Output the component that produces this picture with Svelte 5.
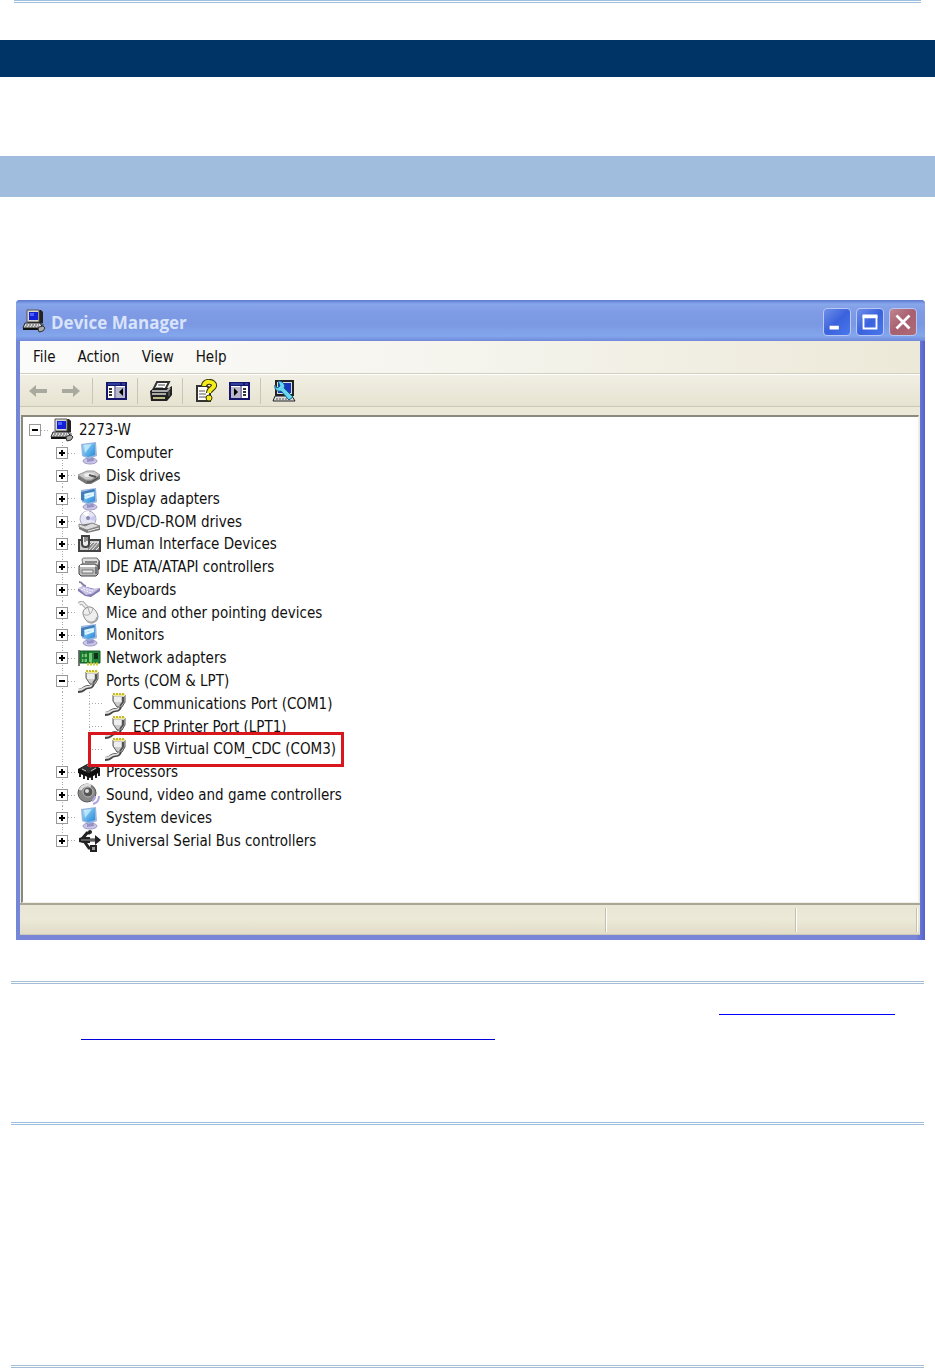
<script lang="ts">
  const menus = ['File', 'Action', 'View', 'Help'];

  const devices = [
    { label: '2273-W', icon: 'pc', depth: 0, open: true },
    { label: 'Computer', icon: 'monitor', depth: 1 },
    { label: 'Disk drives', icon: 'disk', depth: 1 },
    { label: 'Display adapters', icon: 'display', depth: 1 },
    { label: 'DVD/CD-ROM drives', icon: 'dvd', depth: 1 },
    { label: 'Human Interface Devices', icon: 'hid', depth: 1 },
    { label: 'IDE ATA/ATAPI controllers', icon: 'ide', depth: 1 },
    { label: 'Keyboards', icon: 'keyboard', depth: 1 },
    { label: 'Mice and other pointing devices', icon: 'mouse', depth: 1 },
    { label: 'Monitors', icon: 'display', depth: 1 },
    { label: 'Network adapters', icon: 'network', depth: 1 },
    { label: 'Ports (COM & LPT)', icon: 'port', depth: 1, open: true },
    { label: 'Communications Port (COM1)', icon: 'port', depth: 2 },
    { label: 'ECP Printer Port (LPT1)', icon: 'port', depth: 2 },
    { label: 'USB Virtual COM_CDC (COM3)', icon: 'port', depth: 2, marked: true, last: true },
    { label: 'Processors', icon: 'cpu', depth: 1 },
    { label: 'Sound, video and game controllers', icon: 'sound', depth: 1 },
    { label: 'System devices', icon: 'monitor', depth: 1 },
    { label: 'Universal Serial Bus controllers', icon: 'usb', depth: 1, last: true },
  ];
</script>

{#snippet icon(name: string)}
  <svg class="icon" viewBox="0 0 24 24" width="24" height="24" aria-hidden="true">
    {#if name === 'pc'}
      <path d="M6 1h13l2 2v11H6z" fill="#222" />
      <path d="M5 1h12v12H5z" fill="#d8d8d0" stroke="#555" />
      <path d="M7 3h9v8H7z" fill="#1420d8" />
      <path d="M8 4h4v3H8z" fill="#4c60ff" />
      <path d="M3 14h15l3 5H1z" fill="#ddd" stroke="#222" />
      <path d="M4 16h13M3 18h15" stroke="#555" stroke-dasharray="2 1" />
      <path d="M1 20h17" stroke="#111" stroke-width="2" />
      <path d="M19 14c3 1 2 3 1 4" stroke="#333" fill="none" />
      <path d="M17 18l4-1 2 2-2 3-4 1-1-3z" fill="#aaa" stroke="#333" />
    {:else if name === 'monitor' || name === 'display'}
      <ellipse cx="13" cy="20" rx="7" ry="3" fill="#cbc6e6" stroke="#9d98c8" />
      <path d="M10 16l6-1 1 5-7 1z" fill="#9792c4" />
      <path d="M4 3l15-2 1 14-8 3-7-3z" fill="#9cb4dc" />
      <path d="M6 4l12-2v12l-7 2-5-2z" fill="url(#screen)" />
      <path d="M7 4l8-1-7 9z" fill="#d4f4ff" opacity=".7" />
      {#if name === 'display'}
        <path d="M4 5l13-3 1 2-11 3v7l-3-1z" fill="#457db9" />
        <path d="M8 8l9-2M8 11l9-3" stroke="#e2f8ff" stroke-width="2" />
      {/if}
    {:else if name === 'disk'}
      <path d="M1 12l9-4h7l6 4v3l-9 5H9l-8-5z" fill="#777" />
      <path d="M1 11l9-4h7l6 4-9 5H9z" fill="#c9c9c9" stroke="#999" />
      <ellipse cx="12" cy="11" rx="5" ry="2" fill="#eee" />
      <path d="M12 11l7 2" stroke="#555" stroke-width="2" />
      <path d="M10 18h4l7-4" stroke="#444" fill="none" />
    {:else if name === 'dvd'}
      <circle cx="11" cy="9" r="8" fill="#e6e5f4" stroke="#aaa9c5" />
      <path d="M11 9l-5-6a8 8 0 0 1 6-2z" fill="#fff" />
      <path d="M11 9l7-4a8 8 0 0 1 0 6z" fill="#c9caea" />
      <circle cx="11" cy="8" r="2" fill="#8784b4" />
      <path d="M2 15l13-2 8 3v4l-13 3-8-4z" fill="#777" />
      <path d="M2 14l6 2 7-3 8 3-13 4-8-3z" fill="#ddd" stroke="#888" />
      <path d="M11 21l11-3" stroke="#eee" />
    {:else if name === 'hid'}
      <path d="M2 8h21v11H2z" fill="#ccc" stroke="#444" stroke-width="2" />
      <path d="M11 11h11v7H11z" fill="#888" />
      <path d="M12 18l7-8M15 18l7-8M12 14l4-4M19 18l3-3" stroke="#eee" />
      <path d="M5 4h7v8c0 4-7 4-7 0z" fill="#eee" stroke="#444" stroke-width="2" />
      <path d="M8 4v6M10 4v5" stroke="#333" />
    {:else if name === 'ide'}
      <path d="M6 3h14l3 3v8l-3 2H8z" fill="#555" />
      <path d="M5 5c0-2 2-2 3-2h12l2 3-2 7H7z" fill="#ddd" stroke="#777" />
      <path d="M8 7h12" stroke="#888" stroke-width="2" />
      <path d="M2 11l3-2h13l3 2v8l-2 2H4l-2-2z" fill="#bbb" stroke="#444" />
      <path d="M3 11h15" stroke="#fff" stroke-width="2" />
      <path d="M5 15h11v3H5z" fill="#eee" stroke="#777" />
      <path d="M19 12v7" stroke="#777" stroke-width="2" />
    {:else if name === 'keyboard'}
      <path d="M2 4c5 0 2 4 7 4" stroke="#8883a4" stroke-width="2" fill="none" />
      <path d="M1 11l5-3 12 3 5-1v3l-9 6-6-1-7-5z" fill="#837aae" />
      <path d="M1 10l5-2 9 3 8-1-8 6-6 1z" fill="#c8c2e7" />
      <path d="M4 11l10 4M6 10l10 3" stroke="#fff" stroke-dasharray="2 1" />
    {:else if name === 'mouse'}
      <path d="M2 3c5-4 4 2 9 4" stroke="#aaa" stroke-width="4" fill="none" />
      <path d="M2 3c5-4 4 2 9 4" stroke="#eee" stroke-width="2" fill="none" />
      <path d="M9 7c6-4 12 4 12 9 0 6-9 8-12 3-3-4-5-9 0-12z" fill="#eee" stroke="#888" />
      <path d="M6 13c5 3 9 0 10-6M11 7l2 6" stroke="#aaa" fill="none" />
      <path d="M10 20c4 3 10 1 10-4" stroke="#aaa" stroke-width="2" fill="none" />
    {:else if name === 'network'}
      <path d="M2 4v16" stroke="#777" stroke-width="2" />
      <path d="M3 5h20v12H3z" fill="#21863b" stroke="#195827" />
      <path d="M5 8h5v3H5zM5 13h5v3H5zM12 7h3v9h-3z" fill="#75c974" />
      <path d="M17 7h4v6h-4z" fill="#162d19" />
      <path d="M10 18h12" stroke="#ccd33a" stroke-width="3" stroke-dasharray="2 1" />
      <path d="M7 5v12M11 5v12" stroke="#155c27" />
    {:else if name === 'port'}
      <path d="M16 13c0 7-5 4-8 6-2 2-4 3-7 3" stroke="#444" stroke-width="4" fill="none" />
      <path d="M15 13c0 7-4 3-8 6-2 2-4 2-6 2" stroke="#ddd" stroke-width="2" fill="none" />
      <path d="M9 3h12v7l-3 5h-5l-4-6z" fill="#ccc" stroke="#555" />
      <path d="M19 5v5l-3 4" stroke="#555" stroke-width="2" fill="none" />
      <path d="M10 5h7v5h-7z" fill="#eee" />
      <path d="M9 2h12v2H9z" fill="#eeea94" />
      <path d="M9 2h12" stroke="#c8b92b" stroke-width="2" stroke-dasharray="2 1" />
    {:else if name === 'cpu'}
      <path d="M3 12v5M7 14v5M11 15v5M15 15v5M19 13v5M22 11v5" stroke="#222" stroke-width="2" />
      <path d="M1 9l11-6 11 5v4l-10 6-12-5z" fill="#111" />
      <path d="M2 9l10-5 9 4-9 5z" fill="#333" />
      <path d="M5 9l4 2M10 5l4 2M14 11l5-3" stroke="#bbb" />
    {:else if name === 'sound'}
      <circle cx="10" cy="10" r="9" fill="#888" stroke="#555" />
      <path d="M3 7a8 8 0 0 1 11-4" stroke="#ddd" stroke-width="3" fill="none" />
      <circle cx="11" cy="9" r="5" fill="#555" stroke="#bbb" />
      <circle cx="10" cy="8" r="2" fill="#ddd" />
      <path d="M15 18c2-1 3-3 3-5M16 21c4-1 6-4 6-8" stroke="#aaa7df" stroke-width="2" fill="none" />
    {:else if name === 'usb'}
      <path d="M2 11h18M5 10l5-6h3M7 12l5 7h3" stroke="#222" stroke-width="3" fill="none" />
      <path d="M6 8h7v6H6l-4-1V9z" fill="#222" />
      <path d="M4 11h15" stroke="#999" />
      <circle cx="13" cy="3" r="2" fill="#222" />
      <path d="M14 17h5v5h-5z" fill="#999" stroke="#222" stroke-width="2" />
      <path d="M18 6l6 5-6 5z" fill="#222" />
    {:else if name === 'back' || name === 'forward'}
      <path
        d={name === 'back' ? 'M3 12l7-6v4h11v4H10v4z' : 'M21 12l-7-6v4H3v4h11v4z'}
        fill="#aaa99f"
      />
    {:else if name === 'tree' || name === 'pane'}
      <path d="M3 4h19v16H3z" fill="#fff" stroke="#16166d" stroke-width="2" />
      <path d="M3 3h19v4H3z" fill="#16166d" />
      <path d="M4 5h12M18 5h3" stroke="#4969cf" />
      {#if name === 'tree'}
        <path d="M12 8h9v11h-9z" fill="#b9b8ca" />
        <path d="M11 7v12" stroke="#16166d" />
        <path d="M5 10h4M5 13h4M5 16h4" stroke="#333" stroke-width="2" stroke-dasharray="3 1" />
        <path d="M19 9v8l-4-4z" fill="#000" />
      {:else}
        <path d="M4 8h9v11H4z" fill="#b9b8ca" />
        <path d="M14 7v12" stroke="#16166d" />
        <path d="M16 10h4M16 13h4M16 16h4" stroke="#333" stroke-width="2" stroke-dasharray="3 1" />
        <path d="M7 9v8l4-4z" fill="#000" />
      {/if}
    {:else if name === 'printer'}
      <path d="M8 3h12l-4 8H4z" fill="#fff" stroke="#333" stroke-width="2" />
      <path d="M9 6h7M7 9h7" stroke="#444" />
      <path d="M1 12l4-3h15l3-2v9l-5 6H2z" fill="#222" />
      <path d="M3 12h15l3-3M3 15h14" stroke="#aaa" stroke-width="2" fill="none" />
      <path d="M4 19h12" stroke="#bcbc84" stroke-width="2" />
      <path d="M20 12v5" stroke="#777" />
    {:else if name === 'help'}
      <path d="M3 7h10l3 3v12H3z" fill="#fff" stroke="#333" stroke-width="2" />
      <path d="M5 12h6M5 15h7M5 18h7" stroke="#555" />
      <path d="M10 7c0-6 11-5 10 0-1 3-5 3-5 7" stroke="#383800" stroke-width="6" fill="none" />
      <path d="M10 7c0-6 11-5 10 0-1 3-5 3-5 7" stroke="#f5ec1b" stroke-width="4" fill="none" />
      <circle cx="15" cy="19" r="3" fill="#f5ec1b" stroke="#383800" />
    {:else if name === 'scan'}
      <path d="M4 2h17v14H4z" fill="#ddd" stroke="#222" stroke-width="2" />
      <path d="M6 4h13v10H6z" fill="#1838c2" />
      <path d="M3 17h17l3 5H1z" fill="#ddd" stroke="#222" />
      <path d="M4 20h14" stroke="#555" stroke-dasharray="2 1" />
      <path d="M6 2l2 5-3 2-2-3c-1 5 3 7 6 6l8 9 4-3-9-9c2-4-2-7-6-7z" fill="#68d7f1" stroke="#135a80" />
    {/if}
  </svg>
{/snippet}

<svg class="defs" width="0" height="0" aria-hidden="true">
  <linearGradient id="screen" x1="0" x2="1" y1="0" y2="1">
    <stop offset="0" stop-color="#9ee0fc" />
    <stop offset="1" stop-color="#2687d9" />
  </linearGradient>
</svg>

<div class="page">
  <div class="rule top"></div>
  <div class="band dark"></div>
  <div class="band light"></div>

  <main class="window">
    <header class="titlebar">
      {@render icon('pc')}
      <h1>Device Manager</h1>
      <button class="caption" aria-label="Minimize">
        <svg viewBox="0 0 28 28" width="26" height="26"><path d="M6 20h10" stroke="#fff" stroke-width="4" /></svg>
      </button>
      <button class="caption" aria-label="Maximize">
        <svg viewBox="0 0 28 28" width="26" height="26">
          <path d="M7 8h14v13H7z" fill="none" stroke="#fff" stroke-width="2" />
          <path d="M6 8h16" stroke="#fff" stroke-width="4" />
        </svg>
      </button>
      <button class="caption close" aria-label="Close">
        <svg viewBox="0 0 28 28" width="26" height="26"><path d="M7 7l14 14M21 7L7 21" stroke="#fff" stroke-width="3" /></svg>
      </button>
    </header>

    <div class="client">
      <nav class="menubar">
        {#each menus as menu}
          <button>{menu}</button>
        {/each}
      </nav>
      <div class="toolbar">
        <button aria-label="Back">{@render icon('back')}</button>
        <button aria-label="Forward">{@render icon('forward')}</button>
        <i></i>
        <button aria-label="Show console tree">{@render icon('tree')}</button>
        <i></i>
        <button aria-label="Print">{@render icon('printer')}</button>
        <i></i>
        <button aria-label="Help">{@render icon('help')}</button>
        <button aria-label="Show action pane">{@render icon('pane')}</button>
        <i></i>
        <button aria-label="Scan for hardware changes">{@render icon('scan')}</button>
      </div>

      <div class="pane">
        <ul>
          {#each devices as device}
            <li class:marked={device.marked}>
              {#if device.depth > 0}
                <span class="indent"></span>
              {/if}
              {#if device.depth > 1}
                <span class="indent guide"></span>
              {/if}
              <span class="node" class:guide={device.depth > 0} class:last={device.last}>
                {#if device.depth < 2}
                  <button class="expander" class:open={device.open} aria-label="Toggle {device.label}"></button>
                {/if}
              </span>
              <span class="branch" class:long={device.depth > 1}></span>
              {@render icon(device.icon)}
              <span class="label">{device.label}</span>
            </li>
          {/each}
        </ul>
      </div>

      <footer class="status">
        <span></span>
        <span></span>
        <span></span>
      </footer>
    </div>
  </main>

  <section class="note">
    <a class="first" href="#driver" aria-label="Driver"></a>
    <a class="second" href="#driver" aria-label="Driver installation"></a>
  </section>
  <div class="rule bottom"></div>
</div>

<style>
  :global(body) {
    margin: 0;
    background: #fff;
  }
  .page {
    font-family: "DejaVu Sans Condensed", "DejaVu Sans", sans-serif;
    font-size: 15px;
    color: #111;
  }
  .defs {
    position: absolute;
  }
  .icon {
    display: block;
    flex: none;
  }
  button {
    font: inherit;
    color: inherit;
    padding: 0;
    border: 0;
    background: none;
  }

  .rule {
    height: 1px;
    border-top: 1px solid #9fbfdf;
    border-bottom: 1px solid #9fbfdf;
    margin: 0 11px;
  }
  .rule.top {
    margin: 0 14px 37px;
  }
  .band {
    height: 37px;
    background: #003366;
  }
  .band.light {
    height: 41px;
    margin: 79px 0 103px;
    background: #a0bddd;
  }

  .window {
    box-sizing: border-box;
    margin: 0 10px 41px 16px;
    padding: 0 5px 5px 4px;
    background: linear-gradient(90deg, #6f88d8, #7986d8 4px, #7986d8 99%, #5262cf);
    border-radius: 4px 4px 0 0;
    overflow: hidden;
  }
  .titlebar {
    display: flex;
    align-items: center;
    gap: 5px;
    height: 41px;
    margin: 0 -5px 0 -4px;
    padding: 0 8px 0 6px;
    box-sizing: border-box;
    background: linear-gradient(#5c79d0, #88a6ea 4px, #7f9be5 12px, #7b98e3 24px, #83a6ec 36px, #7088d9);
  }
  h1 {
    flex: 1;
    margin: 4px 0 0;
    font: bold 17px "Open Sans", "Noto Sans", sans-serif;
    color: #d9e3fa;
  }
  .caption {
    display: flex;
    margin-top: 3px;
    border: 1px solid #b8c8f5;
    border-radius: 4px;
    background: linear-gradient(135deg, #6f8fea, #3a62dc 50%, #4a78ee);
  }
  .caption.close {
    background: linear-gradient(135deg, #c08590, #a85f70 50%, #b06b75);
  }

  .client {
    background: #ece9d8;
  }
  .menubar {
    display: flex;
    align-items: center;
    gap: 22px;
    height: 32px;
    padding-left: 13px;
    background: linear-gradient(90deg, #fbfbfa, #f5f4ed 50%, #ece9d8);
    border-bottom: 1px solid #d2cfbf;
  }
  .toolbar {
    display: flex;
    align-items: center;
    gap: 9px;
    height: 31px;
    padding-left: 6px;
    border-top: 1px solid #fff;
    border-bottom: 1px solid #cbc8b8;
    background: linear-gradient(#f1efe4, #e7e3d1);
  }
  .toolbar i {
    width: 1px;
    height: 26px;
    margin-right: 2px;
    background: #c9c6b6;
  }

  .pane {
    margin: 8px 1px 0 1px;
    min-height: 488px;
    border: 2px solid #8b897d;
    border-right: 1px solid #f1efe2;
    border-bottom: 1px solid #f1efe2;
    background: #fff;
    box-sizing: border-box;
  }
  ul {
    display: grid;
    grid-auto-rows: 1fr;
    min-height: 433px;
    margin: 0;
    padding: 2px 0 0 6px;
    list-style: none;
  }
  li {
    display: flex;
    align-items: center;
    justify-self: start;
    min-height: 0;
    height: 100%;
    position: relative;
    white-space: nowrap;
  }
  li .icon {
    margin: -1px 5px -1px 1px;
  }
  .indent {
    width: 27px;
    align-self: stretch;
  }
  .node {
    display: flex;
    align-items: center;
    width: 12px;
    align-self: stretch;
  }
  .guide {
    background: repeating-linear-gradient(#aaa 0 1px, transparent 1px 3px) 6px 0 / 1px 100% no-repeat;
  }
  .guide.last {
    background-size: 1px 50%;
  }
  .expander {
    width: 12px;
    height: 12px;
    border: 1px solid #999;
    background:
      linear-gradient(#000, #000) center / 6px 2px no-repeat,
      linear-gradient(#000, #000) center / 2px 6px no-repeat,
      #fff;
  }
  .expander.open {
    background: linear-gradient(#000, #000) center / 6px 2px no-repeat, #fff;
  }
  .branch {
    width: 8px;
    height: 1px;
    background: repeating-linear-gradient(90deg, #aaa 0 1px, transparent 1px 3px);
  }
  .branch.long {
    width: 14px;
    margin-left: -6px;
  }
  .marked::after {
    content: "";
    position: absolute;
    inset: -6px -8px -6px 59px;
    border: 3px solid #d9161c;
    z-index: 1;
  }

  .status {
    display: grid;
    grid-template-columns: 1fr 190px 121px;
    height: 32px;
    padding: 3px 3px 2px 0;
    box-sizing: border-box;
    border-top: 2px solid #aaa798;
    border-bottom: 1px solid #d0c9b8;
    background: linear-gradient(#e9e6d6, #ece9d8 50%, #e2dcc8);
  }
  .status span {
    border-right: 1px solid #c2bfad;
    box-shadow: 1px 0 #fff;
  }

  .note {
    display: flex;
    flex-direction: column;
    height: 138px;
    margin: 0 11px 240px;
    border-top: 3px double #a4bdd4;
    border-bottom: 3px double #9fbfdf;
  }
  .note a {
    height: 24px;
    border-bottom: 1px solid #0000ff;
  }
  .note .first {
    width: 176px;
    margin: 6px 29px 0 auto;
  }
  .note .second {
    width: 414px;
    margin-left: 70px;
    border-color: #0000dd;
  }
  .rule.bottom {
    border-color: #a4bdd4;
  }
</style>
